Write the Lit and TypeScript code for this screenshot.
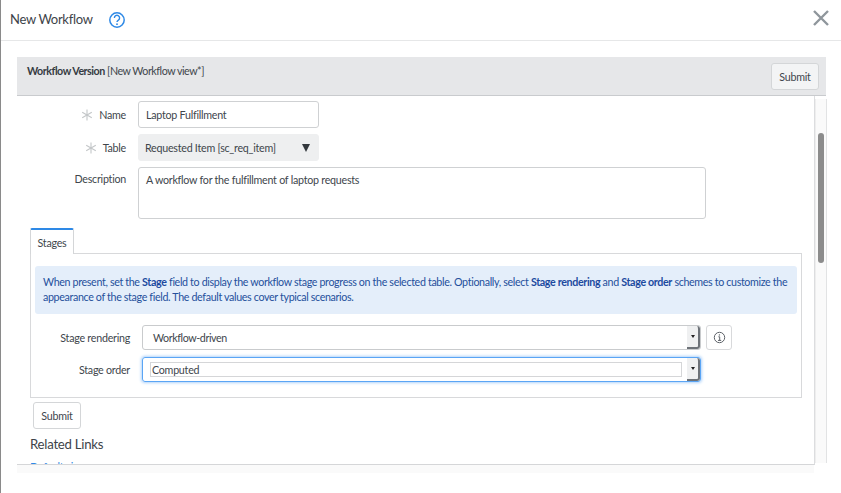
import { LitElement, html, css, svg } from "lit";
import { customElement } from "lit/decorators.js";

const star = svg`<svg class="star" viewBox="0 0 12 12" width="12" height="12"><path d="M6 .5v11M1.2 3.2l9.6 5.6M10.8 3.2l-9.6 5.6" stroke="#c4c7c9" stroke-width="1.1" fill="none"/></svg>`;

@customElement("app-root")
export class AppRoot extends LitElement {
  static styles = css`
    :host { display: block; width: 841px; height: 493px; overflow: hidden; background: #fff; color: #40464c;
      font-family: Lato, "Open Sans", sans-serif; font-size: 10.7px; letter-spacing: -0.25px; box-sizing: border-box; border-left: 1px solid #8a8a8a; }
    * { box-sizing: border-box; }
    .head { height: 41px; border-bottom: 1px solid #e6e7e8; display: flex; align-items: center; padding: 0 12px 3px 9px; }
    .title { font-size: 13px; letter-spacing: -0.3px; color: #3d4349; }
    .help { margin-left: 15px; margin-top: 3px; display: block; }
    .close { margin-left: auto; display: block; margin-top: -2px; }
    .main { padding: 16px 15px 0 16px; }
    .bar { height: 39px; background: #e6e7e9; border-bottom: 1px solid #c9cbce; display: flex; justify-content: space-between; padding: 7px 7px 0 10px; }
    .bar span { letter-spacing: -0.47px; }
    .bar b { font-weight: 700; color: #353b42; }
    .btn { height: 27px; border: 1px solid #d4d6d8; border-radius: 3px; background: #f3f4f5; font: inherit; letter-spacing: inherit; color: #40464c; padding: 0 7px; }
    .bar .btn { width: 48px; margin-top: -1px; padding: 0; }
    .body { height: 369px; display: flex; }
    .content { width: 798px; height: 369px; overflow: hidden; border-right: 1px solid #dcdddf; border-bottom: 1px solid #d5d6d8; padding: 5px 0 0 13px; flex: none; }
    .track { width: 12px; height: 364px; background: #fafafa; border-right: 1px solid #e2e3e4; border-left: 1px solid #eeeeee; padding: 34px 1px 0 2px; margin-top: 3px; flex: none; }
    .thumb { width: 6px; height: 130px; border-radius: 3px; background: #8c8c8c; }
    .foot { width: 797px; height: 8px; background: #fafafa; }
    .row { display: grid; grid-template-columns: 96px auto; column-gap: 12px; align-items: center; margin-bottom: 6px; }
    .lab { display: flex; justify-content: flex-end; align-items: center; gap: 6px; }
    .star { display: block; }
    .field { height: 27px; border: 1px solid #cfd1d3; border-radius: 3px; width: 181px; padding: 0 7px; display: flex; align-items: center; justify-content: space-between; }
    .ro { background: #eeeff0; border-color: #eeeff0; padding: 0 6px; }
    .arrow { width: 0; height: 0; border: 4.5px solid transparent; border-top: 8px solid #33383d; border-bottom: 0; margin-right: 2px; }
    .top { align-items: start; margin-bottom: 9px; }
    .top .lab { padding-top: 5px; }
    .area { width: 568px; height: 52px; align-items: flex-start; padding: 5px 7px; }
    .tab { width: 44px; height: 26px; border: 1px solid #d4d6d8; border-top: 2px solid #2e89e6; border-bottom: 0; display: flex; align-items: center; justify-content: center; background: #fff; position: relative; margin-bottom: -1px; border-radius: 2px 2px 0 0; }
    .panel { width: 772px; height: 145px; border: 1px solid #d8d9db; padding: 12px 4px 0 4px; }
    .info { height: 48px; background: #e4eefa; border-radius: 3px; color: #25509c; padding: 8px; line-height: 15px; white-space: nowrap; letter-spacing: -0.35px; }
    .info b { color: #1c4aa0; font-weight: 700; }
    .srow { display: flex; align-items: center; margin-top: 11px; height: 25px; }
    .srow + .srow { margin-top: 7px; }
    .slab { width: 95px; text-align: right; margin-right: 12px; }
    .sel { width: 559px; height: 25px; border: 1px solid #c9cbcd; border-radius: 3px; display: flex; align-items: center; justify-content: space-between; padding-left: 10px; letter-spacing: -0.4px; }
    .sel.focus { border: 1px solid #5aa5f5; box-shadow: 0 0 3px 1px #b0d3f9; padding-left: 7px; letter-spacing: -0.25px; }
    .inner { width: 532px; height: 15px; border: 1px solid #d5d6d8; padding-left: 1px; display: flex; align-items: center; }
    .drop { width: 13px; height: 100%; background: #eff0f1; border-right: 2px solid #6d7278; border-bottom: 2px solid #6d7278; display: flex; align-items: center; justify-content: center; border-radius: 0 3px 3px 0; }
    .drop i { width: 0; height: 0; border: 2.5px solid transparent; border-top: 3px solid #222; border-bottom: 0; }
    .ibtn { width: 26px; height: 25px; margin-left: 5px; border: 1px solid #d8d9db; border-radius: 3px; display: flex; align-items: center; justify-content: center; }
    .sub { width: 48px; height: 27px; background: #fff; margin: 4px 0 0 3px; padding: 0; display: block; }
    h3 { font-weight: 400; font-size: 13.2px; margin: 7px 0 0; color: #3d4349; }
    a { display: block; color: #2e89e6; margin-top: 8px; }
  `;

  render() {
    return html`
      <div class="head">
        <span class="title">New Workflow</span>
        <svg class="help" width="18" height="18" viewBox="0 0 18 18" aria-label="Help">
          <circle cx="9" cy="9" r="7.2" fill="none" stroke="#2e89e6" stroke-width="1.5"/>
          <path d="M6.4 7a2.6 2.6 0 1 1 4 2.1c-.9.6-1.4 1-1.4 2" fill="none" stroke="#2e89e6" stroke-width="1.4"/>
          <circle cx="9" cy="13.2" r=".9" fill="#2e89e6"/>
        </svg>
        <svg class="close" width="16" height="16" viewBox="0 0 16 16" aria-label="Close">
          <path d="M1 1l14 14M15 1L1 15" stroke="#8f969c" stroke-width="2.4" fill="none"/>
        </svg>
      </div>
      <div class="main">
        <div class="bar">
          <span><b>Workflow Version</b> [New Workflow view*]</span>
          <button class="btn">Submit</button>
        </div>
        <div class="body">
          <div class="content">
            <div class="row"><div class="lab">${star}<span>Name</span></div><div class="field">Laptop Fulfillment</div></div>
            <div class="row"><div class="lab">${star}<span>Table</span></div><div class="field ro">Requested Item [sc_req_item]<span class="arrow"></span></div></div>
            <div class="row top"><div class="lab"><span>Description</span></div><div class="field area">A workflow for the fulfillment of laptop requests</div></div>
            <div class="tab">Stages</div>
            <div class="panel">
              <div class="info">When present, set the <b>Stage</b> field to display the workflow stage progress on the selected table. Optionally, select <b>Stage rendering</b> and <b>Stage order</b> schemes to customize the<br>appearance of the stage field. The default values cover typical scenarios.</div>
              <div class="srow"><span class="slab">Stage rendering</span>
                <div class="sel">Workflow-driven<span class="drop"><i></i></span></div>
                <span class="ibtn"><svg width="13" height="13" viewBox="0 0 13 13" aria-label="Info"><circle cx="6.5" cy="6.5" r="5.2" fill="none" stroke="#5d6268"/><path d="M5.4 5.8h1.3v3.6M5 9.4h3.2" fill="none" stroke="#5d6268"/><circle cx="6.4" cy="3.9" r=".7" fill="#5d6268"/></svg></span>
              </div>
              <div class="srow"><span class="slab">Stage order</span>
                <div class="sel focus"><span class="inner">Computed</span><span class="drop"><i></i></span></div>
              </div>
            </div>
            <button class="btn sub">Submit</button>
            <h3>Related Links</h3>
            <a>Default view</a>
          </div>
          <div class="track"><div class="thumb"></div></div>
        </div>
        <div class="foot"></div>
      </div>
    `;
  }
}
